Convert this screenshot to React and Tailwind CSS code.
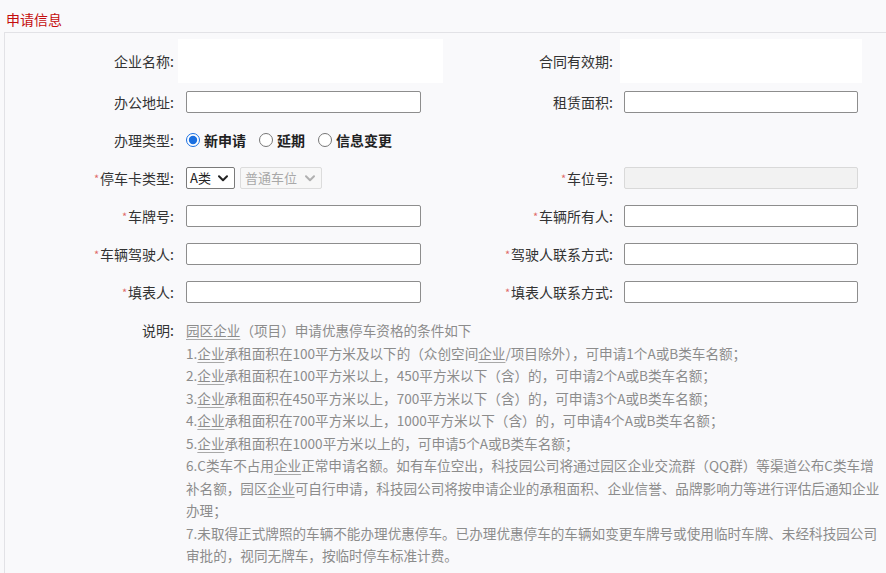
import React from "react";

const Star = () => (
  <span className="text-[#e06a6a] text-[11px] align-[3px] mr-[1px]">*</span>
);

const Label = ({ star, children, right }) => (
  <div
    className={
      "flex items-center justify-end text-[14px] text-[#333] whitespace-nowrap " +
      (right ? "pr-[7px]" : "pr-[4px]")
    }
  >
    {star && <Star />}
    <span>{children}:</span>
  </div>
);

const Input = ({ right, disabled }) => (
  <div className={"flex items-center " + (right ? "pl-[4px]" : "pl-[8px]")}>
    <input
      disabled={disabled}
      className={
        "h-[22px] rounded-[2px] border outline-none " +
        (right ? "w-[234px] " : "w-[235px] ") +
        (disabled
          ? "bg-[#f2f2f2] border-[#d9d9d9]"
          : "bg-white border-[#8d8d8d]")
      }
    />
  </div>
);

const Chevron = ({ color }) => (
  <svg width="10" height="7" viewBox="0 0 10 7" className="shrink-0">
    <path
      d="M1 1.2 L5 5.2 L9 1.2"
      fill="none"
      stroke={color}
      strokeWidth="2"
      strokeLinecap="round"
      strokeLinejoin="round"
    />
  </svg>
);

const Radio = ({ checked, children }) => (
  <label className="flex items-center gap-[4px]">
    <input
      type="radio"
      name="t"
      defaultChecked={checked}
      className="w-[14px] h-[14px] m-0 accent-[#1a6fe0]"
    />
    <span className="font-bold text-[14px] text-[#222]">{children}</span>
  </label>
);

const U = ({ children }) => (
  <span className="underline decoration-[#a8a8a8] underline-offset-[3px]">
    {children}
  </span>
);

export default function App() {
  const lines = [
    <>
      <U>园区企业</U>（项目）申请优惠停车资格的条件如下
    </>,
    <>
      1.<U>企业</U>承租面积在100平方米及以下的（众创空间<U>企业</U>/项目除外），可申请1个A或B类车名额；
    </>,
    <>
      2.<U>企业</U>承租面积在100平方米以上，450平方米以下（含）的，可申请2个A或B类车名额；
    </>,
    <>
      3.<U>企业</U>承租面积在450平方米以上，700平方米以下（含）的，可申请3个A或B类车名额；
    </>,
    <>
      4.<U>企业</U>承租面积在700平方米以上，1000平方米以下（含）的，可申请4个A或B类车名额；
    </>,
    <>
      5.<U>企业</U>承租面积在1000平方米以上的，可申请5个A或B类车名额；
    </>,
    <>
      6.C类车不占用<U>企业</U>正常申请名额。如有车位空出，科技园公司将通过园区企业交流群（QQ群）等渠道公布C类车增
    </>,
    <>
      补名额，园区<U>企业</U>可自行申请，科技园公司将按申请企业的承租面积、企业信誉、品牌影响力等进行评估后通知企业
    </>,
    <>办理；</>,
    <>7.未取得正式牌照的车辆不能办理优惠停车。已办理优惠停车的车辆如变更车牌号或使用临时车牌、未经科技园公司</>,
    <>审批的，视同无牌车，按临时停车标准计费。</>,
  ];

  return (
    <div className="w-[886px] h-[573px] overflow-hidden bg-[#f9f9fb] font-['Noto_Sans_CJK_SC','Noto_Sans',sans-serif]">
      <div className="h-[32px] pl-[6px] pt-[9px] text-[14px] leading-[20px] text-[#c40d0d]">
        申请信息
      </div>
      <div className="ml-[4px] border-t border-l border-[#e2e2e6] h-[541px]">
        <div className="grid grid-cols-[173px_265px_177px_242px] pt-[6px]">
          <div className="h-[44px] flex items-center justify-end pr-[4px] text-[14px] text-[#333]">
            企业名称:
          </div>
          <div className="h-[44px] bg-white" />
          <div className="h-[44px] flex items-center justify-end pr-[7px] text-[14px] text-[#333]">
            合同有效期:
          </div>
          <div className="h-[44px] bg-white" />
        </div>

        <div className="grid grid-cols-[173px_265px_177px_242px] [&>*]:h-[38px]">
          <Label>办公地址</Label>
          <Input />
          <Label right>租赁面积</Label>
          <Input right />

          <Label>办理类型</Label>
          <div className="col-span-3 flex items-center gap-[13px] pl-[8px]">
            <Radio checked>新申请</Radio>
            <Radio>延期</Radio>
            <Radio>信息变更</Radio>
          </div>

          <Label star>停车卡类型</Label>
          <div className="flex items-center gap-[5px] pl-[8px]">
            <div className="w-[49px] h-[22px] flex items-center justify-between pl-[3px] pr-[6px] border border-[#7a7a7a] rounded-[2px] bg-white text-[13px] text-[#222]">
              <span>A类</span>
              <Chevron color="#222" />
            </div>
            <div className="w-[82px] h-[22px] flex items-center justify-between pl-[4px] pr-[6px] border border-[#dcdcdc] rounded-[2px] bg-[#f7f7f7] text-[13px] text-[#a8a8a8]">
              <span>普通车位</span>
              <Chevron color="#b0b0b0" />
            </div>
          </div>
          <Label star right>
            车位号
          </Label>
          <Input right disabled />

          <Label star>车牌号</Label>
          <Input />
          <Label star right>
            车辆所有人
          </Label>
          <Input right />

          <Label star>车辆驾驶人</Label>
          <Input />
          <Label star right>
            驾驶人联系方式
          </Label>
          <Input right />

          <Label star>填表人</Label>
          <Input />
          <Label star right>
            填表人联系方式
          </Label>
          <Input right />
        </div>

        <div className="grid grid-cols-[173px_1fr] pt-[8px] leading-[22.5px]">
          <div className="text-right pr-[4px] text-[14px] text-[#333]">说明:</div>
          <div className="pl-[8px] text-[13.6px] text-[#8c8c8c] whitespace-nowrap">
            {lines.map((l, i) => (
              <div key={i}>{l}</div>
            ))}
          </div>
        </div>
      </div>
    </div>
  );
}
